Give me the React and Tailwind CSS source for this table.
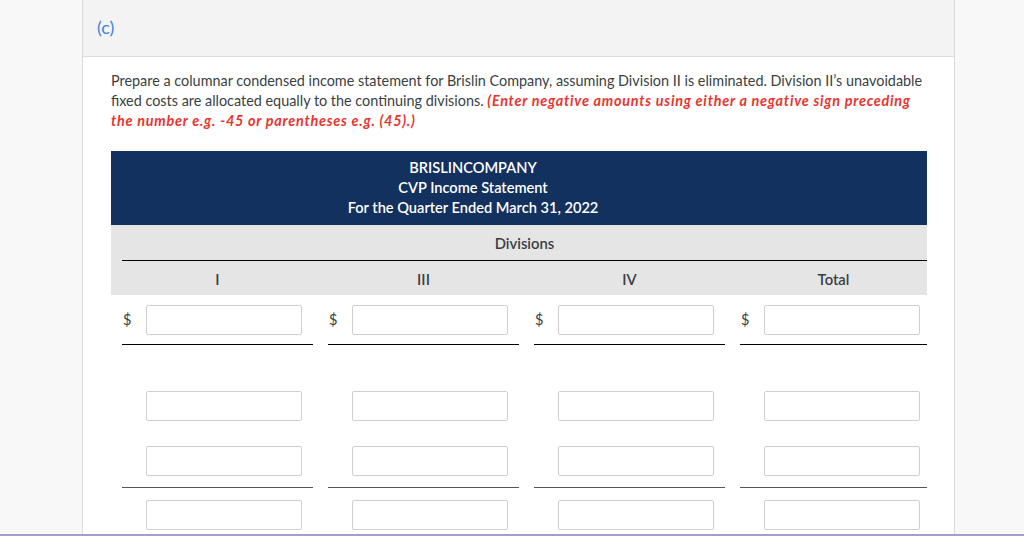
const columns = ["I", "III", "IV", "Total"];

function Field() {
  return (
    <div className="h-[30px] w-[156px] rounded-[2px] border border-[#cfcfcf] bg-white" />
  );
}

function Cell({ dollar }) {
  return (
    <div className="flex items-center">
      <span className="w-[24px] pl-[1px] text-[14.5px] text-[#3a3f44]">
        {dollar ? "$" : ""}
      </span>
      <Field />
    </div>
  );
}

function Row({ dollar, className, cellClass }) {
  return (
    <div
      className={
        "grid grid-cols-[191px_191px_191px_187px] gap-x-[15px] " + (className || "")
      }
    >
      {columns.map((col) => (
        <div key={col} className={cellClass}>
          <Cell dollar={dollar} />
        </div>
      ))}
    </div>
  );
}

export default function App() {
  return (
    <div className="flex h-[536px] w-[1024px] flex-col overflow-hidden bg-[#f8f8f8] font-['Lato',sans-serif]">
      <div className="flex min-h-0 flex-1">
        <div className="w-[82px] shrink-0" />

        <div className="w-[873px] shrink-0 border-x border-[#dadada] bg-white">
          <div className="flex h-[57px] items-center border-b border-[#dcdcdc] bg-[#f3f3f3] pb-[2px] pl-[14px]">
            <span className="text-[18px] text-[#3b86d8]">(c)</span>
          </div>

          <div className="pl-[28px] pr-[27px] pt-[14px]">
            <p className="text-[14.4px] leading-[20px] text-[#3a3f44]">
              Prepare a columnar condensed income statement for Brislin Company,
              assuming Division II is eliminated. Division II’s unavoidable fixed
              costs are allocated equally to the continuing divisions.{" "}
              <span className="font-bold italic tracking-[0.75px] text-[#e8352f]">
                (Enter negative amounts using either a negative sign preceding the
                number e.g. -45 or parentheses e.g. (45).)
              </span>
            </p>

            <div className="mt-[20px] w-[816px]">
              <div className="h-[74px] bg-[#13315e] py-[7px] pr-[92px] text-center text-[14.6px] font-semibold leading-[20px] text-white">
                <div>BRISLINCOMPANY</div>
                <div>CVP Income Statement</div>
                <div>For the Quarter Ended March 31, 2022</div>
              </div>

              <div className="bg-[#e5e5e5] pl-[11px] text-[14.8px] font-semibold leading-[20px] text-[#3a3f44]">
                <div className="border-b border-black pb-[7px] pt-[8px] text-center">
                  Divisions
                </div>
                <div className="grid grid-cols-[191px_191px_191px_187px] gap-x-[15px] pb-[6px] pt-[8px]">
                  {columns.map((col) => (
                    <div key={col} className="text-center">
                      {col}
                    </div>
                  ))}
                </div>
              </div>

              <div className="pl-[11px]">
                <Row dollar cellClass="border-b border-black pb-[9px] pt-[10px]" />
                <Row className="mt-[46px]" />
                <Row
                  className="mt-[25px]"
                  cellClass="border-b border-[#555] pb-[11px]"
                />
                <Row className="mt-[12px]" />
              </div>
            </div>
          </div>
        </div>
      </div>
      <div className="h-[2px] shrink-0 bg-[#a49fc8]" />
    </div>
  );
}
